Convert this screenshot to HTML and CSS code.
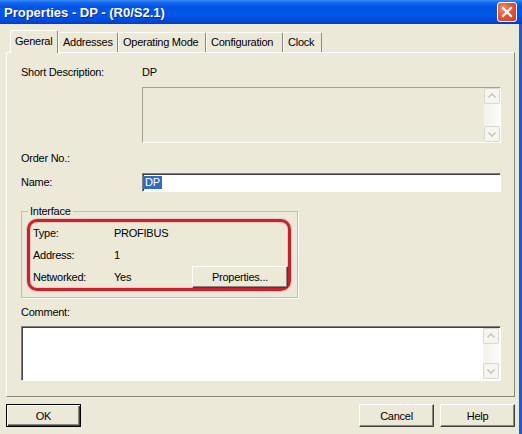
FILE: index.html
```html
<!DOCTYPE html>
<html>
<head>
<meta charset="utf-8">
<link rel="stylesheet" href="styles.css">
</head>
<body>
<div class="window">
  <div class="titlebar">
    <span class="title">Properties - DP - (R0/S2.1)</span>
    <span class="close"><svg width="12" height="12" viewBox="0 0 12 12"><path d="M2 2 L10 10 M10 2 L2 10" stroke="#fff" stroke-width="2.2" stroke-linecap="square"/></svg></span>
  </div>
  <div class="client">
    <div class="tabs">
      <div class="tab active">General</div>
      <div class="tab">Addresses</div>
      <div class="tab">Operating Mode</div>
      <div class="tab">Configuration</div>
      <div class="tab">Clock</div>
    </div>
    <div class="panel">
      <div class="row r-short"><span>Short Description:</span><span>DP</span></div>
      <div class="row r-box"><span></span>
        <div class="memo disabled">
          <div class="sb">
            <div class="sb-btn"><svg width="10" height="10" viewBox="0 0 10 10"><polyline points="1.5,6.5 5,3 8.5,6.5" fill="none" stroke="#C8C6BA" stroke-width="1.6"/></svg></div>
            <div class="sb-btn"><svg width="10" height="10" viewBox="0 0 10 10"><polyline points="1.5,3.5 5,7 8.5,3.5" fill="none" stroke="#C8C6BA" stroke-width="1.6"/></svg></div>
          </div>
        </div>
      </div>
      <div class="row r-order"><span>Order No.:</span><span></span></div>
      <div class="row r-name"><span>Name:</span><div class="edit"><span class="sel">DP</span></div></div>
      <fieldset class="group">
        <legend>Interface</legend>
        <div class="iface">
          <div class="irow"><span>Type:</span><span>PROFIBUS</span></div>
          <div class="irow"><span>Address:</span><span>1</span></div>
          <div class="irow"><span>Networked:</span><span>Yes</span><button class="btn">Properties...</button></div>
        </div>
      </fieldset>
      <div class="comment-label">Comment:</div>
      <div class="memo white">
        <div class="sb">
          <div class="sb-btn"><svg width="10" height="10" viewBox="0 0 10 10"><polyline points="1.5,6.5 5,3 8.5,6.5" fill="none" stroke="#C8C6BA" stroke-width="1.6"/></svg></div>
          <div class="sb-btn"><svg width="10" height="10" viewBox="0 0 10 10"><polyline points="1.5,3.5 5,7 8.5,3.5" fill="none" stroke="#C8C6BA" stroke-width="1.6"/></svg></div>
        </div>
      </div>
    </div>
    <div class="buttons">
      <button class="btn default">OK</button>
      <span class="spacer"></span>
      <button class="btn">Cancel</button>
      <button class="btn help">Help</button>
    </div>
  </div>
</div>
</body>
</html>
```
FILE: styles.css
```css
* { box-sizing: border-box; }
html, body { margin: 0; padding: 0; }
body {
  width: 522px; height: 434px; overflow: hidden;
  font-family: "Liberation Sans", Arial, sans-serif;
  font-size: 11px; letter-spacing: -0.25px; color: #000;
  background: #ECE9D8;
}
.window { width: 522px; height: 434px; display: flex; flex-direction: column; }
.titlebar {
  height: 24px; flex: none; display: flex; align-items: center; justify-content: space-between;
  padding: 0 5px 0 4px;
  background: linear-gradient(#3A8CF8 0, #1262EC 3px, #0055E5 8px, #0257E8 15px, #0049D9 21px, #003CC6 24px);
}
.title { font-weight: bold; font-size: 13px; color: #fff; letter-spacing: 0; text-shadow: 1px 1px 0 #0A2A9A; }
.close {
  width: 20px; height: 20px; border: 1px solid #fff; border-radius: 3px;
  background: radial-gradient(circle at 30% 30%, #F08A6C 0, #E0583A 45%, #C83C1F 100%);
  display: flex; align-items: center; justify-content: center;
}
.client {
  flex: 1; display: flex; flex-direction: column;
  padding: 6px 4px 0 6px; border-right: 3px solid #1F56DD;
}
.tabs { display: flex; align-items: flex-end; height: 22px; padding-left: 4px; flex: none; }
.tab {
  height: 20px; line-height: 19px; padding-left: 4px; white-space: nowrap;
  border-top: 1px solid #fff; border-left: 1px solid #fff; border-right: 1px solid #8A887E;
  border-radius: 2px 2px 0 0;
}
.tab:nth-child(1) { width: 48px; }
.tab:nth-child(2) { width: 60px; }
.tab:nth-child(3) { width: 88px; }
.tab:nth-child(4) { width: 77px; }
.tab:nth-child(5) { width: 39px; }
.tab.active {
  height: 23px; line-height: 21px; margin-bottom: -1px;
  position: relative; z-index: 1; background: #ECE9D8;
}
.panel {
  border: 1px solid; border-color: #fff #8A887E #8A887E #fff;
  padding: 13px 13px 15px 14px;
}
.row { display: grid; grid-template-columns: 121px 1fr; align-items: center; line-height: 13px; }
.r-box { margin-top: 8px; }
.r-order { margin-top: 9px; height: 13px; }
.r-name { margin-top: 8px; }
.memo {
  height: 56px; display: flex; justify-content: flex-end;
  border: 1px solid; border-color: #A5A294 #fff #fff #A5A294;
  padding: 0 0 0 0;
}
.memo.disabled { background: #ECE9D8; }
.memo.white {
  margin-top: 7px; height: 55px; background: #fff;
  border-color: #808080 #fff #fff #808080; box-shadow: inset 1px 1px 0 #404040;
  padding: 1px 1px 1px 0;
}
.sb {
  width: 16px; display: flex; flex-direction: column; justify-content: space-between;
  background: linear-gradient(to right, #F3F2EC, #FBFBF8);
}
.sb-btn {
  width: 16px; height: 16px; border: 1px solid #DAD8CC; border-radius: 2px;
  background: #F6F5F0; display: flex; align-items: center; justify-content: center;
}
.edit {
  height: 19px; background: #fff; display: flex; align-items: center;
  border: 1px solid; border-color: #808080 #fff #fff #808080; box-shadow: inset 1px 1px 0 #404040;
  padding-left: 0;
}
.sel { background: #316AC5; color: #fff; line-height: 13px; padding: 0 2px; }
.group {
  margin: 13px 0 0 0; width: 277px; min-inline-size: 0;
  padding: 1px 6px 6px 5px;
  border: 1px solid #C2BFB2; box-shadow: 1px 1px 0 #fff;
}
.group legend { padding: 0 2px; margin-left: 1px; line-height: 13px; }
.iface {
  border: 3px solid #C9212B; border-radius: 10px; padding-left: 3px;
  box-shadow: 0 0 0 1px rgba(230, 140, 140, 0.35), inset 0 0 0 1px rgba(230, 140, 140, 0.35);
}
.irow { display: grid; grid-template-columns: 81px 78px 96px; height: 22px; align-items: center; }
.irow .btn { height: 22px; width: 96px; }
.comment-label { margin-top: 8px; line-height: 13px; }
.btn {
  font-family: inherit; font-size: 11px; letter-spacing: -0.25px; color: #000;
  background: #ECE9D8; padding: 0; margin: 0;
  border: 1px solid; border-color: #fff #404040 #404040 #fff;
  box-shadow: inset -1px -1px 0 #8A887E;
  border-radius: 0;
}
.buttons { display: flex; margin-top: 7px; }
.buttons .btn { width: 75px; height: 23px; }
.btn.default { border: 1px solid #000; box-shadow: inset 1px 1px 0 #fff, inset -1px -1px 0 #404040, inset -2px -2px 0 #8A887E; }
.spacer { flex: 1; }
.help { margin-left: 6px; }
```
